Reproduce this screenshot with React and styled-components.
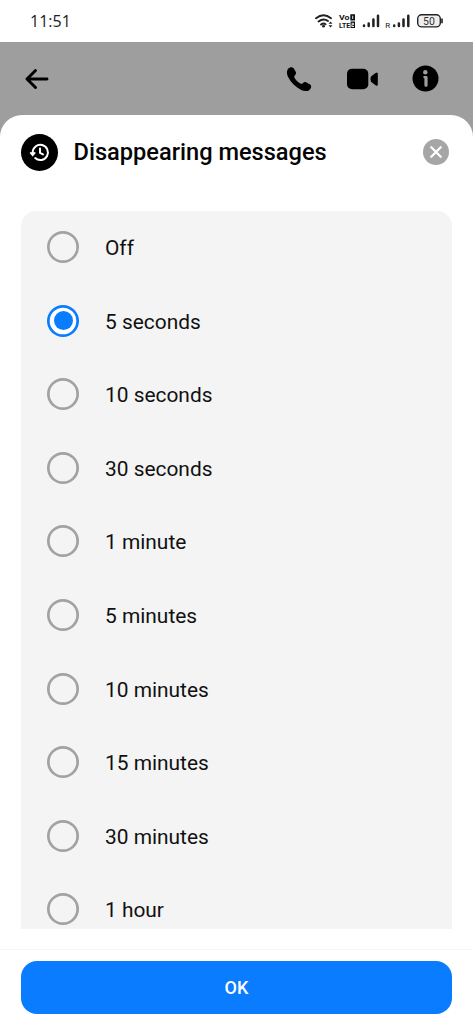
import React, { useState } from "react";
import styled, { createGlobalStyle } from "styled-components";

const GlobalStyle = createGlobalStyle`
  * { box-sizing: border-box; }
  body { margin: 0; background: #fff; font-family: Roboto, "Liberation Sans", sans-serif; }
`;

const Screen = styled.div`
  width: 473px;
  height: 1024px;
  display: flex;
  flex-direction: column;
  overflow: hidden;
  background: #9e9e9e;
`;

const StatusBar = styled.header`
  height: 42px;
  flex: none;
  display: flex;
  align-items: center;
  justify-content: space-between;
  padding: 0 29px 0 30px;
  background: #fff;
`;

const Clock = styled.time`
  font: 400 16px/20px "Open Sans", sans-serif;
  color: #222;
`;

const StatusIcons = styled.svg`
  display: block;
  width: 130px;
  height: 42px;
`;

const ChatBar = styled.nav`
  height: 73px;
  flex: none;
  display: flex;
  align-items: center;
  padding: 0 34px 0 24px;
`;

const ChatActions = styled.div`
  display: flex;
  align-items: center;
  margin-left: auto;
`;

const IconButton = styled.button`
  display: block;
  padding: 0;
  border: 0;
  background: none;
  color: #000;
  margin-left: ${(p) => p.$gap || 0}px;
  svg { display: block; }
`;

const Sheet = styled.section`
  flex: 1;
  min-height: 0;
  display: flex;
  flex-direction: column;
  background: #fff;
  border-radius: 22px 22px 0 0;
`;

const SheetHeader = styled.div`
  height: 95.5px;
  flex: none;
  display: flex;
  align-items: flex-start;
  padding: 19px 24px 0 21px;
`;

const TimerBadge = styled.span`
  width: 37px;
  height: 37px;
  border-radius: 50%;
  background: #000;
  display: grid;
  place-items: center;
`;

const Title = styled.h1`
  margin: 0 auto 0 15.5px;
  font-size: 23.6px;
  font-weight: 500;
  line-height: 36px;
  color: #050505;
  white-space: nowrap;
`;

const CloseButton = styled.button`
  width: 26px;
  height: 26px;
  margin-top: 5px;
  padding: 0;
  border: 0;
  border-radius: 50%;
  background: #a6a6a6;
  display: grid;
  place-items: center;
`;

const OptionList = styled.div`
  height: 718.5px;
  flex: none;
  margin: 0 21px;
  overflow: hidden;
  background: #f4f4f4;
  border-radius: 15px 15px 0 0;
`;

const Option = styled.label`
  height: 73.55px;
  display: flex;
  align-items: center;
  padding-left: 26px;
`;

const Radio = styled.input`
  appearance: none;
  width: 32px;
  height: 32px;
  margin: 0 26px 0 0;
  flex: none;
  border-radius: 50%;
  box-shadow: inset 0 0 0 2.7px #a2a2a2;
  display: grid;
  place-items: center;
  &:checked { box-shadow: inset 0 0 0 2.7px #0a7cff; background: #fff; }
  &:checked::before {
    content: "";
    width: 19px;
    height: 19px;
    border-radius: 50%;
    background: #0a7cff;
  }
`;

const OptionText = styled.span`
  font-size: 20.9px;
  line-height: 28px;
  padding-top: 2px;
  color: #111;
`;

const Footer = styled.footer`
  margin-top: 20px;
  border-top: 1px solid #f5f5f5;
  padding: 11px 21px 0;
`;

const OkButton = styled.button`
  width: 100%;
  height: 53px;
  display: block;
  padding: 0;
  border: 0;
  border-radius: 16px;
  background: #0a7cff;
  color: #fff;
  font: 500 18px/51px Roboto, sans-serif;
`;

const durations = [
  "Off", "5 seconds", "10 seconds", "30 seconds", "1 minute",
  "5 minutes", "10 minutes", "15 minutes", "30 minutes", "1 hour",
];

const Indicators = () => (
  <StatusIcons viewBox="314 0 130 42">
    <g fill="none" stroke="#222" strokeWidth="2" strokeLinecap="round">
      <path d="M316 18.2Q323.500 12.300 331 18.200M318.500 21.500Q323.500 17.700 328 21M321 24.500Q323.500 22.700 325.500 24.200" />
    </g>
    <circle cx="323.500" cy="26.200" r="1.400" fill="#222" />
    <path d="M328.500 23.800L330.500 21.500L332.500 23.800ZM328.500 25.200L330.500 27.500L332.500 25.200Z" fill="#222" />
    <g fontFamily="Roboto, sans-serif" fontSize="8" fontWeight="700" fill="#111">
      <text x="339" y="20" textLength="10.500" lengthAdjust="spacingAndGlyphs">Vo</text>
      <text x="339" y="28" textLength="11" lengthAdjust="spacingAndGlyphs">LTE</text>
    </g>
    <path d="M350.300 14.300H355V20.500H350.300ZM350.600 21.500H355V28H350.600Z" fill="#111" />
    <path d="M352.700 15.800V19M351.600 23.300H353.500V24.700H351.800V26.500H354" fill="none" stroke="#fff" strokeWidth=".9" />
    <g stroke="#222" strokeWidth="2.500" strokeLinecap="round">
      <path d="M364 25.500V26M368.700 23.500V26M373.400 19.500V26M378 15.700V26" />
      <path d="M394.200 25.500V26M398.900 23.500V26M403.500 19.500V26M408.300 15.700V26" />
    </g>
    <text x="385.300" y="28" fontFamily="Roboto, sans-serif" fontSize="8" fill="#222">R</text>
    <rect x="417.700" y="14.700" width="22.600" height="12.200" rx="4" fill="#eee" stroke="#222" strokeWidth="1.400" />
    <path d="M442 18.500V23.200" stroke="#222" strokeWidth="1.600" />
    <text x="429" y="24.600" textAnchor="middle" fontFamily="Roboto, sans-serif" fontSize="10.500" fill="#333">50</text>
  </StatusIcons>
);

export default function App() {
  const [selected, setSelected] = useState("5 seconds");
  return (
    <>
      <GlobalStyle />
      <Screen>
        <StatusBar>
          <Clock>11:51</Clock>
          <Indicators />
        </StatusBar>
        <ChatBar>
          <IconButton aria-label="Back">
            <svg width="26" height="24" viewBox="0 0 26 24" fill="none" stroke="currentColor" strokeWidth="2.900" strokeLinecap="round" strokeLinejoin="round">
              <path d="M23 12H3M11.500 3.500L3 12L11.500 20.500" />
            </svg>
          </IconButton>
          <ChatActions>
            <IconButton aria-label="Call">
              <svg width="26" height="26" viewBox="-.5 0 26.500 26" fill="currentColor">
                <path d="M1.600 2.600C3 .8 5.800.2 7.300 2L9.400 5.600C10.200 7.200 9.500 8.300 8.300 9.700C7.600 10.600 7.900 11.500 8.600 12.500C10 14.500 11.800 16.200 13.700 17.400C14.700 18 15.600 18.200 16.400 17.500C17.700 16.300 18.900 15.700 20.400 16.500L24.100 18.700C25.900 20 25.200 22.800 23.400 24.100C21.500 25.600 18.200 25.800 15 24.200C8.800 21.200 4.300 16.400 1.500 10.800C.1 7.700.1 4.700 1.600 2.600Z" />
              </svg>
            </IconButton>
            <IconButton aria-label="Video call" $gap={34}>
              <svg width="32" height="22" viewBox="0 0 32 22" fill="currentColor">
                <rect x="1" y=".8" width="21.300" height="20.400" rx="5" />
                <path d="M25 8.500L29.600 5Q31.800 3.500 31.800 6V16.200Q31.800 18.700 29.600 17.200L25 13.700Q23.800 11 25 8.500Z" />
              </svg>
            </IconButton>
            <IconButton aria-label="Details" $gap={34}>
              <svg width="27" height="27" viewBox="0 0 27 27">
                <circle cx="13.500" cy="13.500" r="13" />
                <circle cx="13.300" cy="7.300" r="2.200" fill="#9e9e9e" />
                <path d="M12.200 11H14.200Q15.600 11 15.600 12.400V20.500Q15.600 21.800 14 21.800Q12.400 21.800 12.400 20.500V13.300H12.200Q11.200 13.100 11.200 12.100Q11.200 11.200 12.200 11Z" fill="#9e9e9e" />
              </svg>
            </IconButton>
          </ChatActions>
        </ChatBar>
        <Sheet>
          <SheetHeader>
            <TimerBadge>
              <svg width="21" height="19" viewBox="0 0 21 19" fill="none" stroke="#fff" strokeWidth="2" strokeLinecap="round" strokeLinejoin="round">
                <path d="M3.700 10.500V9.500A7.600 7.600 0 1 1 6.200 15.100M11 5.400V9.800L14 11.400" />
                <path d="M1.400 9.800H6L3.700 12.700Z" fill="#fff" strokeWidth="1.300" />
              </svg>
            </TimerBadge>
            <Title>Disappearing messages</Title>
            <CloseButton aria-label="Close">
              <svg width="14" height="14" viewBox="0 0 14 14" stroke="#fff" strokeWidth="2.300" strokeLinecap="round">
                <path d="M2.300 2.300L11.700 11.700M11.700 2.300L2.300 11.700" />
              </svg>
            </CloseButton>
          </SheetHeader>
          <OptionList role="radiogroup">
            {durations.map((label) => (
              <Option key={label}>
                <Radio type="radio" name="duration" checked={selected === label} onChange={() => setSelected(label)} />
                <OptionText>{label}</OptionText>
              </Option>
            ))}
          </OptionList>
          <Footer>
            <OkButton>OK</OkButton>
          </Footer>
        </Sheet>
      </Screen>
    </>
  );
}
